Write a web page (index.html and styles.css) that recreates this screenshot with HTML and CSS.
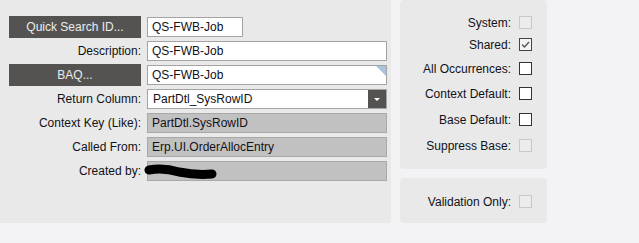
FILE: index.html
```html
<!DOCTYPE html>
<html lang="en">
<head>
  <meta charset="UTF-8" />
  <title>Quick Search</title>
  <link rel="stylesheet" href="styles.css">
</head>
<body>
  <div class="page">
    <!-- main fields -->
    <div class="panel main">
      <div class="grid">
        <button class="btn">Quick Search ID...</button>
        <div class="field"><input class="input short" value="QS-FWB-Job"></div>

        <label class="lbl">Description:</label>
        <div class="field"><input class="input" value="QS-FWB-Job"></div>

        <button class="btn">BAQ...</button>
        <div class="field"><input class="input" value="QS-FWB-Job"><span class="corner"></span></div>

        <label class="lbl">Return Column:</label>
        <div class="field">
          <div class="select">
            <span>PartDtl_SysRowID</span>
            <span class="drop"><svg width="8" height="5" viewBox="0 0 8 5"><path d="M1 1h6L4 4z" fill="#fff"/></svg></span>
          </div>
        </div>

        <label class="lbl">Context Key (Like):</label>
        <div class="field"><input class="input ro" value="PartDtl.SysRowID" readonly></div>

        <label class="lbl">Called From:</label>
        <div class="field"><input class="input ro" value="Erp.UI.OrderAllocEntry" readonly></div>

        <label class="lbl">Created by:</label>
        <div class="field">
          <input class="input ro" value="" readonly>
          <svg class="scribble" width="76" height="20" viewBox="0 0 76 20">
            <path d="M5 8 C15 6 25 7 35 10 C45 12 56 13 68 12" stroke="#000" stroke-width="9" stroke-linecap="round" fill="none"/>
          </svg>
        </div>
      </div>
    </div>

    <!-- flags -->
    <div class="side">
      <div class="panel flags">
        <div class="check-row"><span>System:</span><span class="box off"></span></div>
        <div class="check-row"><span>Shared:</span><span class="box checked"><svg width="11" height="11" viewBox="0 0 11 11"><path d="M2 5.5l2.5 2.5 4.5-5" stroke="#555" stroke-width="1.4" fill="none"/></svg></span></div>
        <div class="check-row"><span>All Occurrences:</span><span class="box"></span></div>
        <div class="check-row"><span>Context Default:</span><span class="box"></span></div>
        <div class="check-row"><span>Base Default:</span><span class="box"></span></div>
        <div class="check-row"><span>Suppress Base:</span><span class="box off"></span></div>
      </div>
      <div class="panel validation">
        <div class="check-row"><span>Validation Only:</span><span class="box off"></span></div>
      </div>
    </div>
  </div>
</body>
</html>
```

FILE: styles.css
```css
body {
  margin: 0;
  background: #f3f3f5;
  font-family: "Liberation Sans", Arial, sans-serif;
  font-size: 12px;
  color: #111118;
}
.page {
  display: flex;
  gap: 9px;
  align-items: flex-start;
}
.panel {
  background: #e9e9e9;
  border-radius: 4px;
}
.main {
  width: 382px;
  height: 207px;
  padding: 16px 0 0 9px;
  border-radius: 0 0 4px 0;
}
.grid {
  display: grid;
  grid-template-columns: 132px 240px;
  grid-auto-rows: 22px;
  column-gap: 6px;
  row-gap: 2px;
}
.btn {
  height: 22px;
  border: none;
  background: #555352;
  color: #ececec;
  font-family: inherit;
  font-size: 12px;
  padding: 0;
}
.lbl {
  align-self: center;
  text-align: right;
}
.field {
  position: relative;
  align-self: center;
  height: 20px;
}
.input {
  box-sizing: border-box;
  width: 240px;
  height: 20px;
  margin: 0;
  border: 1px solid #a3a3a3;
  background: #fff;
  padding: 0 4px;
  font-family: inherit;
  font-size: 12px;
  color: #111118;
}
.input.short {
  width: 96px;
}
.input.ro {
  background: #c1c1c1;
  border-color: #a8a8a8;
}
.corner {
  position: absolute;
  top: 1px;
  right: 1px;
  width: 0;
  height: 0;
  border-top: 10px solid #a9c2e0;
  border-left: 10px solid transparent;
}
.select {
  box-sizing: border-box;
  width: 240px;
  height: 20px;
  border: 1px solid #a3a3a3;
  background: #fff;
  display: flex;
  align-items: center;
  justify-content: space-between;
  padding-left: 5px;
}
.drop {
  width: 18px;
  height: 18px;
  background: #555352;
  display: flex;
  align-items: center;
  justify-content: center;
}
.scribble {
  position: absolute;
  left: -3px;
  top: 1px;
}
.side {
  display: flex;
  flex-direction: column;
  gap: 9px;
}
.flags {
  width: 147px;
  height: 153px;
  padding-top: 16px;
}
.validation {
  width: 147px;
  height: 28px;
  padding-top: 17px;
}
.check-row {
  display: flex;
  justify-content: flex-end;
  align-items: center;
  gap: 8px;
  height: 13px;
  padding-right: 15px;
}
.flags .check-row:nth-child(2) { margin-top: 9px; }
.flags .check-row:nth-child(3) { margin-top: 11px; }
.flags .check-row:nth-child(4) { margin-top: 12px; }
.flags .check-row:nth-child(5) { margin-top: 13px; }
.flags .check-row:nth-child(6) { margin-top: 13px; }
.box {
  box-sizing: border-box;
  width: 13px;
  height: 13px;
  border: 1px solid #333;
  background: #fff;
  display: flex;
  align-items: center;
  justify-content: center;
}
.box.off {
  border-color: #c9c9c9;
  background: #ececec;
}
.box.checked {
  border-color: #444;
  background: #f4f4f4;
}
```
